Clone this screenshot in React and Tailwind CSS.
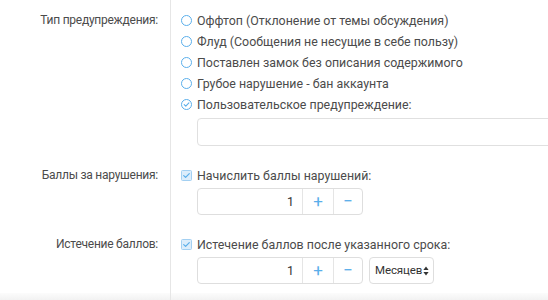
import React from "react";

function Radio({ checked }) {
  return (
    <svg width="11" height="11" viewBox="0 0 11 11" className="shrink-0">
      <circle cx="5.5" cy="5.5" r="5" fill="#fff" stroke="#5aaeea" strokeWidth="1" />
      {checked && (
        <path d="M3.2 5.6 L4.8 7.1 L7.9 3.9" fill="none" stroke="#5aaeea" strokeWidth="1.1" strokeLinecap="round" strokeLinejoin="round" />
      )}
    </svg>
  );
}

function Checkbox() {
  return (
    <svg width="11" height="11" viewBox="0 0 11 11" className="shrink-0">
      <rect x="0.5" y="0.5" width="10" height="10" rx="1" fill="#dcedfb" stroke="#a3d0f2" strokeWidth="1" />
      <path d="M2.7 5.6 L4.6 7.4 L8.3 3.6" fill="none" stroke="#5aaeea" strokeWidth="1.2" strokeLinecap="round" strokeLinejoin="round" />
    </svg>
  );
}

function NumberBox() {
  return (
    <div className="flex h-[27px] w-[166px] shrink-0 rounded-[4px] border border-[#dedede] bg-white">
      <div className="flex w-[104px] items-center justify-end pr-[8px] text-[#333]">1</div>
      <div className="flex w-[31px] items-center justify-center border-l border-[#e5e5e5] text-[17px] text-[#5aaeea]">+</div>
      <div className="flex flex-1 items-center justify-center border-l border-[#e5e5e5] text-[17px] text-[#5aaeea]">−</div>
    </div>
  );
}

function Row({ label, children }) {
  return (
    <div className="flex">
      <div className="w-[171px] shrink-0 border-r border-[#e6e6e6] pr-[12px] pt-[10px] pb-[9px] text-right text-[12px] leading-[21px] tracking-[-0.25px]">
        {label}
      </div>
      <div className="flex-1 pl-[10px] pt-[10px] pb-[9px] leading-[21px]">{children}</div>
    </div>
  );
}

export default function App() {
  const opts = [
    "Оффтоп (Отклонение от темы обсуждения)",
    "Флуд (Сообщения не несущие в себе пользу)",
    "Поставлен замок без описания содержимого",
    "Грубое нарушение - бан аккаунта",
    "Пользовательское предупреждение:",
  ];
  return (
    <div className="relative flex h-[300px] w-[548px] flex-col overflow-hidden bg-white font-['Roboto',sans-serif] text-[12.4px] text-[#4b4b4b]">
      <Row label="Тип предупреждения:">
        {opts.map((o, i) => (
          <div key={i} className="flex h-[21px] items-center gap-[5px] whitespace-nowrap">
            <Radio checked={i === 4} />
            <span>{o}</span>
          </div>
        ))}
        <div className="mt-[3px] pl-[16px]">
          <div className="h-[28px] w-[400px] rounded-[4px] border border-[#e0e0e0] bg-white"></div>
        </div>
      </Row>
      <Row label="Баллы за нарушения:">
        <div className="flex h-[21px] items-center gap-[5px] whitespace-nowrap">
          <Checkbox />
          <span>Начислить баллы нарушений:</span>
        </div>
        <div className="mt-[2px] pl-[16px]">
          <NumberBox />
        </div>
      </Row>
      <Row label="Истечение баллов:">
        <div className="flex h-[21px] items-center gap-[5px] whitespace-nowrap">
          <Checkbox />
          <span>Истечение баллов после указанного срока:</span>
        </div>
        <div className="mt-[2px] flex gap-[6px] pl-[16px]">
          <NumberBox />
          <div className="flex h-[27px] w-[65px] shrink-0 items-center justify-between whitespace-nowrap rounded-[4px] border border-[#dedede] bg-white pl-[5px] pr-[4px] text-[11.5px] tracking-[-0.1px] text-[#333]">
            <span>Месяцев</span>
            <svg width="6" height="10" viewBox="0 0 6 10" className="shrink-0">
              <path d="M3 0.5 L5.6 4 L0.4 4 Z" fill="#333" />
              <path d="M3 9.5 L5.6 6 L0.4 6 Z" fill="#333" />
            </svg>
          </div>
        </div>
      </Row>
      <div className="flex flex-1">
        <div className="w-[171px] shrink-0 border-r border-[#e6e6e6] bg-gradient-to-b from-[#fcfcfc] to-[#f2f2f2]"></div>
        <div className="flex-1 bg-gradient-to-b from-[#fcfcfc] to-[#f2f2f2]"></div>
      </div>
    </div>
  );
}
